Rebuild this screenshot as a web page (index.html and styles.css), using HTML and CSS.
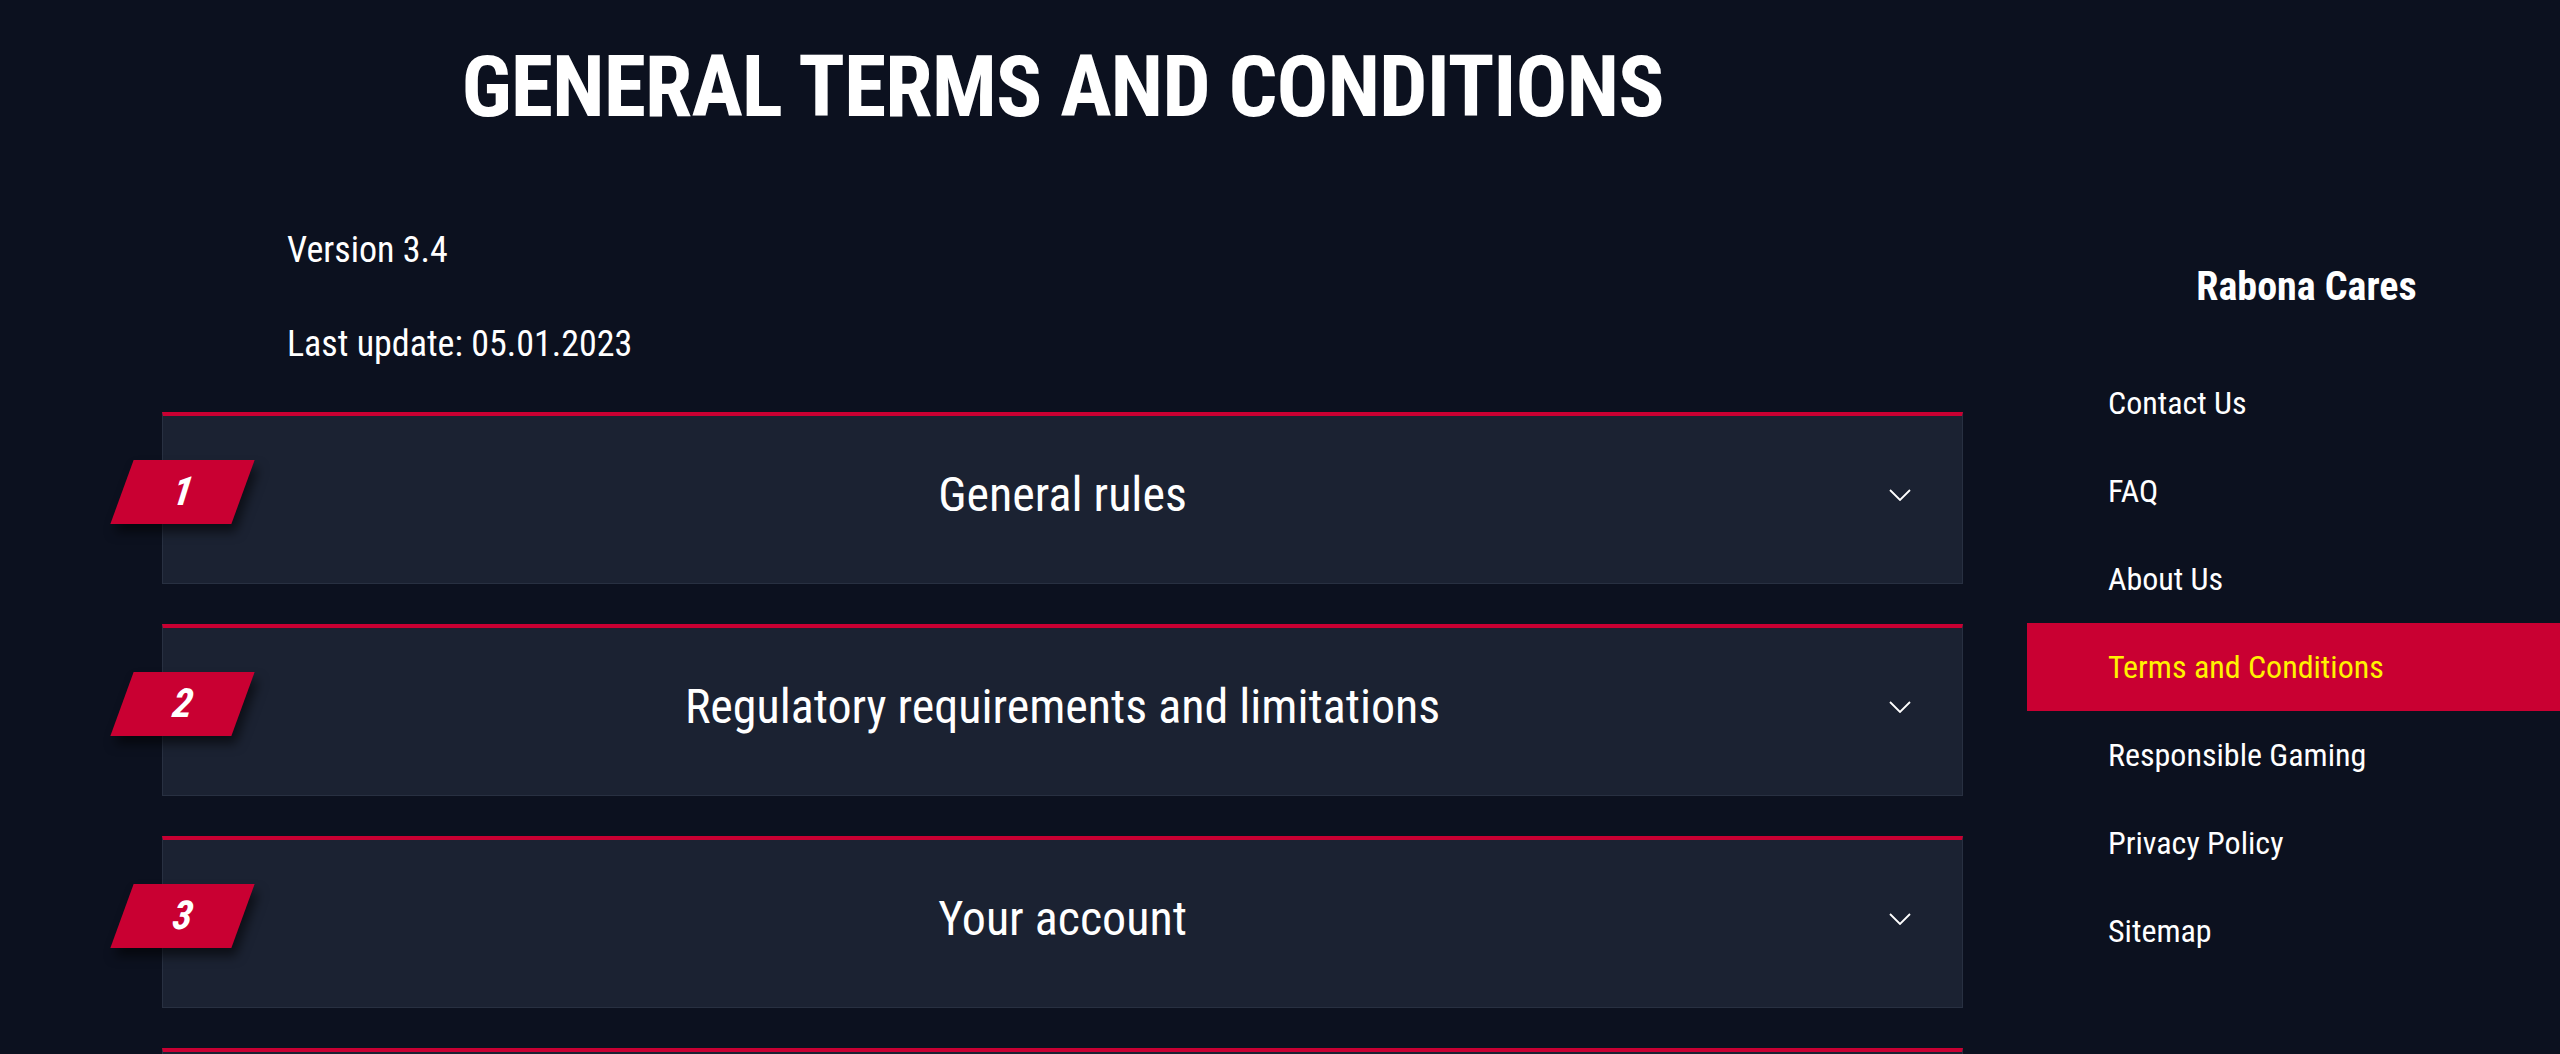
FILE: index.html
```html
<!DOCTYPE html>
<html lang="en">
<head>
<meta charset="utf-8">
<title>General Terms and Conditions</title>
<link rel="stylesheet" href="styles.css">
</head>
<body>
<div class="page">
  <main class="main">
    <h1 class="title">GENERAL TERMS AND CONDITIONS</h1>
    <div class="meta">
      <p>Version 3.4</p>
      <p>Last update: 05.01.2023</p>
    </div>
    <div class="accordion">
      <section class="item">
        <div class="badge"><span>1</span></div>
        <h2 class="item-title">General rules</h2>
        <svg class="chev" viewBox="0 0 22 12" width="22" height="12"><path d="M1 1 L11 11 L21 1" fill="none" stroke="#fff" stroke-width="1.8"/></svg>
      </section>
      <section class="item">
        <div class="badge"><span>2</span></div>
        <h2 class="item-title">Regulatory requirements and limitations</h2>
        <svg class="chev" viewBox="0 0 22 12" width="22" height="12"><path d="M1 1 L11 11 L21 1" fill="none" stroke="#fff" stroke-width="1.8"/></svg>
      </section>
      <section class="item">
        <div class="badge"><span>3</span></div>
        <h2 class="item-title">Your account</h2>
        <svg class="chev" viewBox="0 0 22 12" width="22" height="12"><path d="M1 1 L11 11 L21 1" fill="none" stroke="#fff" stroke-width="1.8"/></svg>
      </section>
      <section class="item"></section>
    </div>
  </main>
  <aside class="side">
    <h3 class="side-title">Rabona Cares</h3>
    <nav class="side-nav">
      <a class="side-link" href="#">Contact Us</a>
      <a class="side-link" href="#">FAQ</a>
      <a class="side-link" href="#">About Us</a>
      <a class="side-link active" href="#">Terms and Conditions</a>
      <a class="side-link" href="#">Responsible Gaming</a>
      <a class="side-link" href="#">Privacy Policy</a>
      <a class="side-link" href="#">Sitemap</a>
    </nav>
  </aside>
</div>
</body>
</html>
```
FILE: styles.css
```css
html, body {
  margin: 0;
  padding: 0;
  background: #0c111f;
  height: 100%;
  overflow: hidden;
}
body {
  font-family: "Roboto Condensed", "Roboto", "Liberation Sans", sans-serif;
  font-stretch: 87.5%;
  color: #ffffff;
}
.page {
  display: flex;
  gap: 64px;
  padding-left: 162px;
}
.main {
  width: 1801px;
  flex: none;
}
.title {
  margin: 44px 0 0;
  font-size: 86px;
  line-height: 86px;
  font-weight: 700;
  letter-spacing: -1px;
  text-align: center;
}
.meta {
  margin-top: 97px;
  padding-left: 125px;
}
.meta p {
  margin: 0 0 47px;
  font-size: 36px;
  line-height: 47px;
}
.meta p:last-child {
  margin-bottom: 44px;
}
.accordion {
  display: flex;
  flex-direction: column;
  gap: 40px;
}
.item {
  position: relative;
  box-sizing: border-box;
  height: 172px;
  background: #1b2232;
  border: 1px solid #283041;
  border-top: 4px solid #c90032;
  display: grid;
  grid-template-columns: 1fr auto 1fr;
  align-items: center;
}
.item-title {
  grid-column: 2;
  margin: 0 0 10px;
  font-size: 48px;
  font-weight: 400;
  line-height: 56px;
  text-align: center;
}
.chev {
  grid-column: 3;
  justify-self: end;
  margin: 0 51px 10px 0;
}
.badge {
  position: absolute;
  left: -41px;
  top: 44px;
  width: 121px;
  height: 64px;
  display: flex;
  align-items: center;
  justify-content: center;
}
.badge::before {
  content: "";
  position: absolute;
  inset: 0;
  background: #c90032;
  transform: skewX(-20deg);
  box-shadow: 7px 8px 10px rgba(0, 0, 0, 0.55);
}
.badge span {
  position: relative;
  font-size: 40px;
  font-weight: 700;
  font-style: italic;
  line-height: 1;
  transform: skewX(-8deg);
}
.side {
  flex: 1;
  padding-top: 263px;
}
.side-title {
  margin: 0 0 48px;
  padding-left: 26px;
  font-size: 40px;
  line-height: 48px;
  font-weight: 700;
  text-align: center;
}
.side-nav {
  display: flex;
  flex-direction: column;
}
.side-link {
  display: block;
  height: 88px;
  line-height: 88px;
  padding-left: 81px;
  font-size: 32px;
  color: #ffffff;
  text-decoration: none;
}
.side-link.active {
  background: #c90032;
  color: #fff200;
}
```
